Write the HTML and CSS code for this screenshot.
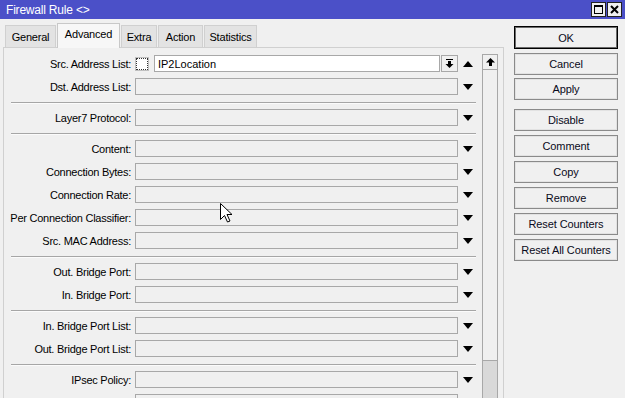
FILE: index.html
```html
<!DOCTYPE html>
<html>
<head>
<meta charset="utf-8">
<link rel="stylesheet" href="styles.css">
</head>
<body>
<div class="window">
  <div class="titlebar">
    <span class="title">Firewall Rule &lt;&gt;</span>
    <div class="wbtns">
      <svg width="32" height="15" viewBox="0 0 32 15">
        <rect x="0.5" y="0.5" width="14" height="14" fill="#f0f0f0" stroke="#222"/>
        <rect x="3.5" y="3.5" width="8" height="8" fill="none" stroke="#000" stroke-width="1"/>
        <rect x="3" y="3" width="9" height="2" fill="#000"/>
        <rect x="16.5" y="0.5" width="14" height="14" fill="#f0f0f0" stroke="#222"/>
        <path d="M20 4 L27 11 M27 4 L20 11" stroke="#000" stroke-width="2"/>
      </svg>
    </div>
  </div>
  <div class="body">
    <div class="left">
      <div class="tabs">
        <div class="tab t-general">General</div>
        <div class="tab active t-advanced">Advanced</div>
        <div class="tab t-extra">Extra</div>
        <div class="tab t-action">Action</div>
        <div class="tab t-stats">Statistics</div>
      </div>
      <div class="panel">
        <div class="form">
          <div class="row">
            <span class="label">Src. Address List:</span>
            <div class="combo">
              <span class="check"></span>
              <span class="input white">IP2Location</span>
              <span class="mini">
                <svg width="9" height="9" viewBox="0 0 9 9"><rect x="1" y="0" width="7" height="1" fill="#000"/><rect x="3" y="2" width="3" height="3" fill="#000"/><path d="M0.5 5 L8.5 5 L4.5 9 Z" fill="#000"/></svg>
              </span>
            </div>
            <span class="arrow"><svg width="10" height="6" viewBox="0 0 10 6"><path d="M0 6 L10 6 L5 0 Z" fill="#000"/></svg></span>
          </div>
          <div class="row">
            <span class="label">Dst. Address List:</span>
            <span class="box"></span>
            <span class="arrow"><svg width="10" height="6" viewBox="0 0 10 6"><path d="M0 0 L10 0 L5 6 Z" fill="#000"/></svg></span>
          </div>
          <div class="sep"></div>
          <div class="row">
            <span class="label">Layer7 Protocol:</span>
            <span class="box"></span>
            <span class="arrow"><svg width="10" height="6" viewBox="0 0 10 6"><path d="M0 0 L10 0 L5 6 Z" fill="#000"/></svg></span>
          </div>
          <div class="sep"></div>
          <div class="row">
            <span class="label">Content:</span>
            <span class="box"></span>
            <span class="arrow"><svg width="10" height="6" viewBox="0 0 10 6"><path d="M0 0 L10 0 L5 6 Z" fill="#000"/></svg></span>
          </div>
          <div class="row">
            <span class="label">Connection Bytes:</span>
            <span class="box"></span>
            <span class="arrow"><svg width="10" height="6" viewBox="0 0 10 6"><path d="M0 0 L10 0 L5 6 Z" fill="#000"/></svg></span>
          </div>
          <div class="row">
            <span class="label">Connection Rate:</span>
            <span class="box"></span>
            <span class="arrow"><svg width="10" height="6" viewBox="0 0 10 6"><path d="M0 0 L10 0 L5 6 Z" fill="#000"/></svg></span>
          </div>
          <div class="row">
            <span class="label">Per Connection Classifier:</span>
            <span class="box"></span>
            <span class="arrow"><svg width="10" height="6" viewBox="0 0 10 6"><path d="M0 0 L10 0 L5 6 Z" fill="#000"/></svg></span>
          </div>
          <div class="row">
            <span class="label">Src. MAC Address:</span>
            <span class="box"></span>
            <span class="arrow"><svg width="10" height="6" viewBox="0 0 10 6"><path d="M0 0 L10 0 L5 6 Z" fill="#000"/></svg></span>
          </div>
          <div class="sep"></div>
          <div class="row">
            <span class="label">Out. Bridge Port:</span>
            <span class="box"></span>
            <span class="arrow"><svg width="10" height="6" viewBox="0 0 10 6"><path d="M0 0 L10 0 L5 6 Z" fill="#000"/></svg></span>
          </div>
          <div class="row">
            <span class="label">In. Bridge Port:</span>
            <span class="box"></span>
            <span class="arrow"><svg width="10" height="6" viewBox="0 0 10 6"><path d="M0 0 L10 0 L5 6 Z" fill="#000"/></svg></span>
          </div>
          <div class="sep"></div>
          <div class="row">
            <span class="label">In. Bridge Port List:</span>
            <span class="box"></span>
            <span class="arrow"><svg width="10" height="6" viewBox="0 0 10 6"><path d="M0 0 L10 0 L5 6 Z" fill="#000"/></svg></span>
          </div>
          <div class="row">
            <span class="label">Out. Bridge Port List:</span>
            <span class="box"></span>
            <span class="arrow"><svg width="10" height="6" viewBox="0 0 10 6"><path d="M0 0 L10 0 L5 6 Z" fill="#000"/></svg></span>
          </div>
          <div class="sep"></div>
          <div class="row">
            <span class="label">IPsec Policy:</span>
            <span class="box"></span>
            <span class="arrow"><svg width="10" height="6" viewBox="0 0 10 6"><path d="M0 0 L10 0 L5 6 Z" fill="#000"/></svg></span>
          </div>
          <div class="row">
            <span class="label"></span>
            <span class="box"></span>
            <span class="arrow"></span>
          </div>
        </div>
        <div class="scrollbar">
          <div class="sb-btn"><svg width="9" height="8" viewBox="0 0 9 8"><path d="M0 4.5 L9 4.5 L4.5 0 Z" fill="#000"/><rect x="3" y="4" width="3" height="4" fill="#000"/></svg></div>
          <div class="sb-thumb"></div>
          <div class="sb-track"></div>
        </div>
      </div>
    </div>
    <div class="buttons">
      <div class="btn default">OK</div>
      <div class="btn">Cancel</div>
      <div class="btn b-apply">Apply</div>
      <div class="btn b-disable">Disable</div>
      <div class="btn">Comment</div>
      <div class="btn">Copy</div>
      <div class="btn">Remove</div>
      <div class="btn">Reset Counters</div>
      <div class="btn">Reset All Counters</div>
    </div>
  </div>
  <svg class="cursor" width="13" height="20" viewBox="0 0 13 20">
    <path d="M0.5 0.5 L0.5 16.5 L4.5 12.5 L7.5 19 L10 18 L7 11.5 L12 11.5 Z" fill="#fff" stroke="#000" stroke-width="1" stroke-linejoin="miter"/>
  </svg>
</div>
</body>
</html>
```

FILE: styles.css
```css
* { box-sizing: border-box; }
html, body { margin: 0; padding: 0; }
body {
  background: #f0f0f0;
  font-family: "Liberation Sans", Arial, sans-serif;
  font-size: 11px;
  color: #000;
}
.window {
  position: relative;
  width: 625px;
  height: 398px;
  overflow: hidden;
  background: #f0f0f0;
}
.titlebar {
  height: 19px;
  background: #4b50c8;
  display: flex;
  align-items: center;
  justify-content: space-between;
  padding: 0 2px 0 6px;
}
.title {
  color: #fff;
  font-size: 12px;
  letter-spacing: -0.2px;
}
.wbtns { display: flex; height: 15px; }
.wbtns svg { display: block; }

.body {
  display: flex;
  height: 379px;
}
.left {
  width: 501px;
  margin-left: 3px;
  display: flex;
  flex-direction: column;
  min-height: 0;
}
.tabs {
  flex-shrink: 0;
  display: flex;
  align-items: flex-end;
  height: 28px;
  padding-left: 2px;
}
.tab {
  height: 22px;
  display: flex;
  align-items: center;
  justify-content: center;
  background: #e3e3e3;
  border: 1px solid #d0d0d0;
  border-bottom: none;
  margin-right: 1px;
  font-size: 11px;
  letter-spacing: -0.2px;
}
.t-general { width: 51px; }
.t-advanced { width: 63px; }
.t-extra { width: 36px; }
.t-action { width: 45px; }
.t-stats { width: 53px; }
.tab.active {
  height: 25px;
  background: #f7f7f7;
  border-color: #c8c8c8;
  margin-bottom: -1px;
  position: relative;
  z-index: 1;
  padding-bottom: 4px;
}
.panel {
  flex: 1;
  min-height: 0;
  overflow: hidden;
  display: flex;
  border: 1px solid #d0d0d0;
  border-bottom: none;
  background: #f0f0f0;
}
.form {
  flex: 1;
  padding-top: 4px;
}
.row {
  display: flex;
  align-items: center;
  height: 23px;
}
.label {
  width: 127px;
  text-align: right;
  white-space: nowrap;
  font-size: 11px;
  letter-spacing: -0.25px;
}
.box, .combo {
  flex-shrink: 0;
  margin-left: 4px;
  width: 323px;
  height: 17px;
}
.box {
  border: 1px solid #a8a8a8;
  background: #f0f0f0;
}
.combo {
  display: flex;
  align-items: center;
}
.check {
  width: 12px;
  height: 12px;
  margin-left: 1px;
  border: 1px dotted #333;
  background: #fff;
  outline: 1px solid #c0c0c0;
}
.input.white {
  margin-left: 6px;
  width: 287px;
  height: 17px;
  border: 1px solid #a8a8a8;
  background: #fff;
  padding-left: 3px;
  display: flex;
  align-items: center;
  font-size: 11px;
}
.mini {
  margin-left: 1px;
  width: 17px;
  height: 17px;
  border: 1px solid #a8a8a8;
  display: flex;
  align-items: center;
  justify-content: center;
}
.mini svg { display: block; }
.arrow {
  width: 20px;
  display: flex;
  justify-content: center;
  align-items: center;
}
.arrow svg { display: block; }
.sep {
  height: 8px;
  margin: 0 5px 0 7px;
  padding-top: 4px;
}
.sep::before {
  content: "";
  display: block;
  border-top: 1px solid #a6a6a6;
  border-bottom: 1px solid #fbfbfb;
}
.scrollbar {
  width: 16px;
  margin: 6px 5px 0 1px;
  display: flex;
  flex-direction: column;
}
.sb-btn {
  height: 16px;
  flex-shrink: 0;
  border: 1px solid #a8a8a8;
  background: #f0f0f0;
  display: flex;
  align-items: center;
  justify-content: center;
}
.sb-btn svg { display: block; }
.sb-thumb {
  height: 291px;
  flex-shrink: 0;
  border: 1px solid #a8a8a8;
  border-top: none;
  background: #f0f0f0;
}
.sb-track {
  flex: 1;
  border-left: 1px solid #a8a8a8;
  border-right: 1px solid #a8a8a8;
  background: #d9d9d9;
}
.buttons {
  margin-left: 10px;
  width: 104px;
  padding-top: 7px;
  display: flex;
  flex-direction: column;
  gap: 4px;
}
.btn {
  height: 22px;
  border: 1px solid #8a8a8a;
  box-shadow: inset 0 0 0 1px #e2e2e2;
  background: #f0f0f0;
  display: flex;
  align-items: center;
  justify-content: center;
  font-size: 11px;
  letter-spacing: -0.1px;
  color: #0a0a20;
}
.btn.default {
  height: 23px;
  border-color: #000;
  box-shadow: inset 0 0 0 1px #6a6a6a;
}
.b-apply { margin-top: -1px; }
.b-disable { margin-top: 5px; }
.cursor {
  position: absolute;
  left: 220px;
  top: 203px;
}
```
